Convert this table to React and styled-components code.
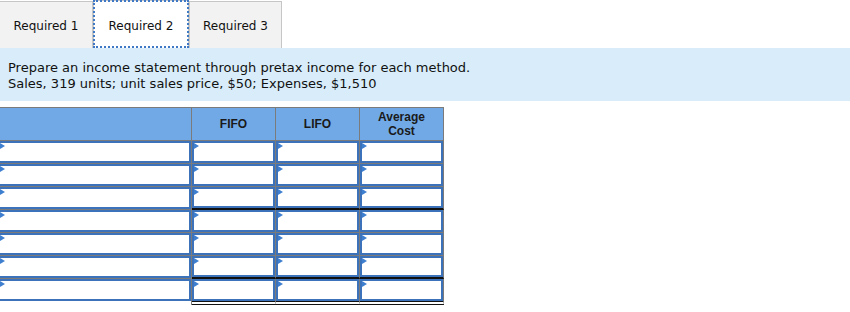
import React from "react";
import styled, { createGlobalStyle } from "styled-components";

const GlobalStyle = createGlobalStyle`
  html, body {
    margin: 0;
    padding: 0;
    background: #fff;
  }
  body {
    font-family: "DejaVu Sans", Verdana, sans-serif;
  }
`;

const Page = styled.div`
  width: 850px;
  height: 312px;
  overflow: hidden;
`;

const TabBar = styled.div`
  display: flex;
  align-items: flex-end;
  height: 48px;
`;

const Tab = styled.div`
  box-sizing: border-box;
  height: ${(p) => (p.$active ? "48px" : "47px")};
  width: ${(p) => p.$w}px;
  display: flex;
  align-items: center;
  justify-content: center;
  font-size: 12px;
  color: #111;
  background-color: ${(p) => (p.$active ? "#ffffff" : "#f2f2f2")};
  border: 1px solid #c6c6c6;
  border-bottom: none;
  border-left: ${(p) => (p.$first ? "none" : "1px solid #c6c6c6")};
  outline: ${(p) => (p.$active ? "2px dotted #3f78c4" : "none")};
  outline-offset: -2px;
  padding-top: 2px;
`;

const Band = styled.div`
  background: #d8edf9;
  height: 53px;
  box-sizing: border-box;
  padding: 12px 8px 0;
  font-size: 13px;
  line-height: 16px;
  color: #111;
`;

const Table = styled.table`
  margin-top: 6px;
  border-collapse: separate;
  border-spacing: 0;
  table-layout: fixed;
  width: 444px;
`;

const HeadCell = styled.th`
  background: #71a9e6;
  height: 32px;
  padding: 0;
  border-top: 1px solid #7b7b7b;
  border-bottom: 1px solid #7b7b7b;
  border-right: 1px solid #7b7b7b;
  font-family: "Liberation Sans", Arial, sans-serif;
  font-weight: bold;
  font-size: 12px;
  line-height: 14px;
  color: #1a1a1a;
`;

const bottomRule = {
  gray: "1px solid #7b7b7b",
  black: "2px solid #111",
  double: "4px double #111",
  none: "none",
};

const Cell = styled.td`
  padding: 0;
  font-size: 0;
  line-height: 0;
  vertical-align: top;
  border-right: 1px solid #7b7b7b;
  border-bottom: ${(p) => bottomRule[p.$below || "gray"]};
`;

const Field = styled.div`
  position: relative;
  box-sizing: border-box;
  height: ${(p) => p.$h || 22}px;
  border: 2px solid #3b72b9;
  border-left: ${(p) => (p.$first ? "none" : "2px solid #3b72b9")};
  background: #fff;

  &::before {
    content: "";
    position: absolute;
    left: 0;
    top: 0;
    border-top: 3px solid transparent;
    border-bottom: 3px solid transparent;
    border-left: 5px solid #3f7fcf;
  }
`;

const rows = [0, 1, 2, 3, 4, 5, 6];

export default function App() {
  return (
    <Page>
      <GlobalStyle />
      <TabBar>
        <Tab $first $w={93}>Required 1</Tab>
        <Tab $active $w={96}>Required 2</Tab>
        <Tab $w={93}>Required 3</Tab>
      </TabBar>
      <Band>
        Prepare an income statement through pretax income for each method.
        <br />
        Sales, 319 units; unit sales price, $50; Expenses, $1,510
      </Band>
      <Table>
        <colgroup>
          <col style={{ width: 192 }} />
          <col style={{ width: 84 }} />
          <col style={{ width: 84 }} />
          <col style={{ width: 84 }} />
        </colgroup>
        <thead>
          <tr>
            <HeadCell />
            <HeadCell>FIFO</HeadCell>
            <HeadCell>LIFO</HeadCell>
            <HeadCell>
              Average
              <br />
              Cost
            </HeadCell>
          </tr>
        </thead>
        <tbody>
          {rows.map((r) => {
            const ruled = r === 2 || r === 5;
            const last = r === 6;
            const below = last ? "double" : ruled ? "black" : "gray";
            return (
              <tr key={r}>
                <Cell $below={last ? "none" : "gray"}>
                  <Field $first />
                </Cell>
                {[0, 1, 2].map((c) => (
                  <Cell key={c} $below={below}>
                    <Field $h={ruled ? 21 : 22} />
                  </Cell>
                ))}
              </tr>
            );
          })}
        </tbody>
      </Table>
    </Page>
  );
}
